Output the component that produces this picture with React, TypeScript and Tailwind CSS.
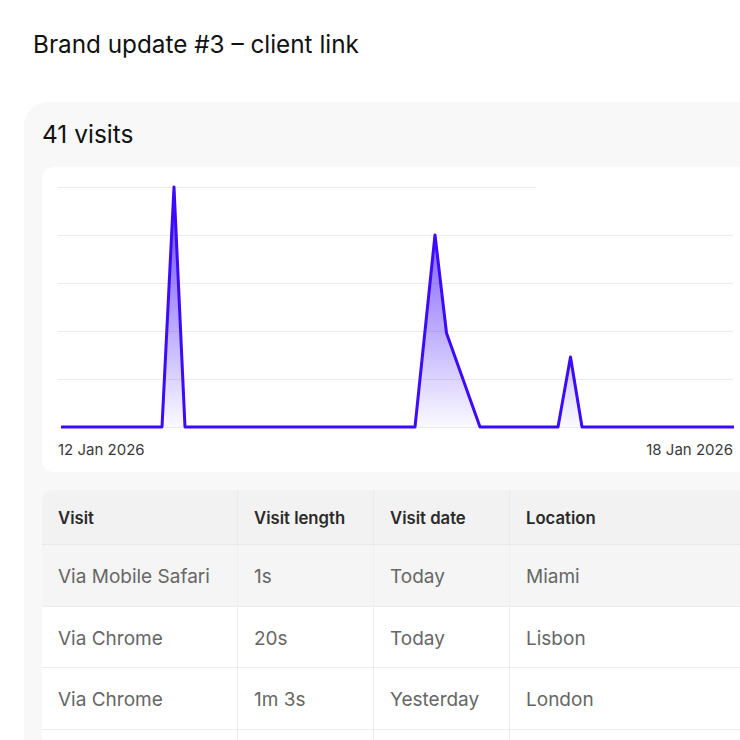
import React from "react";

const LINE = "#3b0aff";

const pts: [number, number][] = [
  [19, 260],
  [120, 260],
  [132, 20],
  [143, 260],
  [373, 260],
  [393, 68],
  [404.5, 166],
  [438, 260],
  [516, 260],
  [528.5, 190],
  [540, 260],
  [692, 260],
];

function Chart() {
  const line = pts.map((p, i) => `${i === 0 ? "M" : "L"}${p[0]} ${p[1]}`).join(" ");
  const area = `${line} L692 260 L19 260 Z`;
  const grid = [20, 68, 116, 164, 212, 260];
  return (
    <svg width="708" height="266" viewBox="0 0 708 266" className="block">
      <defs>
        <linearGradient id="fillg" x1="0" y1="20" x2="0" y2="260" gradientUnits="userSpaceOnUse">
          <stop offset="0" stopColor={LINE} stopOpacity="0.8" />
          <stop offset="1" stopColor={LINE} stopOpacity="0.02" />
        </linearGradient>
      </defs>
      {grid.map((y, i) => (
        <line
          key={y}
          x1="16"
          x2={i === 0 ? 494 : 691}
          y1={y + 0.5}
          y2={y + 0.5}
          stroke="#ebebeb"
          strokeWidth="1"
        />
      ))}
      <path d={area} fill="url(#fillg)" />
      <path d={line} fill="none" stroke={LINE} strokeWidth="3" strokeLinejoin="round" strokeLinecap="butt" />
    </svg>
  );
}

const rows = [
  ["Via Mobile Safari", "1s", "Today", "Miami"],
  ["Via Chrome", "20s", "Today", "Lisbon"],
  ["Via Chrome", "1m 3s", "Yesterday", "London"],
  ["", "", "", ""],
];
const heights = ["h-[62px]", "h-[61px]", "h-[62px]", "h-[61px]"];

export default function App() {
  return (
    <div
      className="h-[740px] w-[740px] overflow-hidden bg-white"
      style={{ fontFamily: "Inter, 'Noto Sans', sans-serif" }}
    >
      <div className="pl-[33px] pt-[28px] text-[24.3px] leading-[32px] text-[#111]">
        Brand update #3 – client link
      </div>
      <div className="ml-[24px] mt-[42px] w-[744px] rounded-[24px] bg-[#f8f8f8] px-[18px] pt-[16px] pb-[40px]">
        <div className="text-[24.5px] leading-[32px] text-[#111]">41 visits</div>
        <div className="mt-[17px] h-[305px] rounded-[12px] bg-white">
          <Chart />
          <div className="mt-[7px] flex justify-between pl-[16px] pr-[17px] text-[15px] leading-[20px] text-[#3a3a3a]">
            <span>12 Jan 2026</span>
            <span>18 Jan 2026</span>
          </div>
        </div>
        <div className="mt-[18px] overflow-hidden rounded-t-[10px]">
          <div className="grid grid-cols-[196px_136px_136px_1fr] bg-[#f2f2f2] text-[16.7px] font-semibold text-[#2a2a2a]">
            {["Visit", "Visit length", "Visit date", "Location"].map((h, i) => (
              <div
                key={h}
                className={`flex h-[55px] items-center border-b border-[#e9e9e9] pl-[16px] pt-[3px] ${i < 3 ? "border-r" : ""}`}
              >
                {h}
              </div>
            ))}
          </div>
          {rows.map((r, ri) => (
            <div
              key={ri}
              className={`grid grid-cols-[196px_136px_136px_1fr] text-[19px] text-[#666] ${ri === 0 ? "bg-[#f5f5f5]" : "bg-white"}`}
            >
              {r.map((c, i) => (
                <div
                  key={i}
                  className={`flex ${heights[ri]} items-center border-b border-[#ededed] pl-[16px] pt-[4px] ${i < 3 ? "border-r" : ""}`}
                >
                  {c}
                </div>
              ))}
            </div>
          ))}
        </div>
      </div>
    </div>
  );
}
